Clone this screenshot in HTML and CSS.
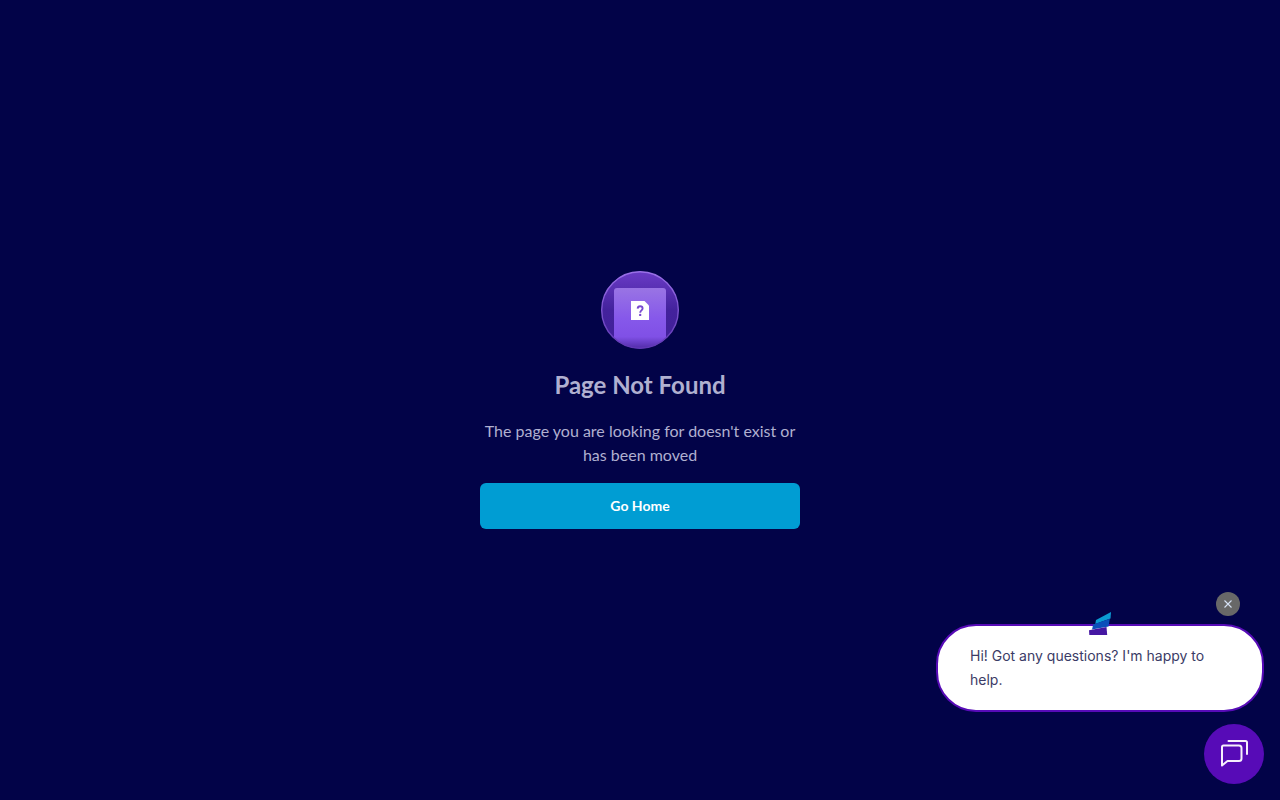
FILE: index.html
```html
<!DOCTYPE html>
<html lang="en">
<head>
<meta charset="utf-8">
<meta name="viewport" content="width=device-width, initial-scale=1">
<title>Page Not Found</title>
<link rel="stylesheet" href="styles.css">
</head>
<body>
<main class="not-found">
  <svg class="badge" viewBox="0 0 78 78" aria-hidden="true">
    <defs>
      <linearGradient id="disc" x1="0" y1="0" x2="0" y2="1">
        <stop offset="0" stop-color="#6a3bc6"/>
        <stop offset=".5" stop-color="#43229c"/>
        <stop offset="1" stop-color="#41209a"/>
      </linearGradient>
      <linearGradient id="panel" x1="0" y1="17" x2="0" y2="78" gradientUnits="userSpaceOnUse">
        <stop offset="0" stop-color="#9974e4"/>
        <stop offset=".5" stop-color="#8658ea"/>
        <stop offset=".8" stop-color="#8050e6"/>
        <stop offset="1" stop-color="#4f2aa4"/>
      </linearGradient>
      <linearGradient id="rim" x1="0" y1="0" x2="0" y2="1">
        <stop offset="0" stop-color="#9a70e8"/>
        <stop offset="1" stop-color="#6038b4"/>
      </linearGradient>
      <clipPath id="round"><circle cx="39" cy="39" r="38.5"/></clipPath>
    </defs>
    <circle cx="39" cy="39" r="38.5" fill="url(#disc)"/>
    <rect x="13" y="17" width="52" height="66" rx="3" fill="url(#panel)" clip-path="url(#round)"/>
    <circle cx="39" cy="39" r="38.3" fill="none" stroke="url(#rim)" stroke-width="1.4"/>
    <path d="M30 30H43.500L48 34.500V49H30Z" fill="#fff"/>
    <path d="M36.600 37.600C36.800 36 37.800 35.200 39.100 35.200C40.600 35.200 41.600 36.100 41.600 37.500C41.600 39.300 39.200 39.500 39.200 41.700" fill="none" stroke="#7849d0" stroke-width="1.900"/>
    <circle cx="39.200" cy="43.900" r="1.200" fill="#7849d0"/>
  </svg>
  <h1 class="title">Page Not Found</h1>
  <p class="message">The page you are looking for doesn't exist or has been moved</p>
  <button class="home" type="button">Go Home</button>
</main>

<aside class="chat" aria-label="Chat">
  <button class="dismiss" type="button" aria-label="Close message">
    <svg width="8" height="8" viewBox="0 0 8 8" aria-hidden="true"><path d="M.5 .5L7.500 7.500M7.500 .5L.5 7.500" stroke="#d5e1f5" stroke-width="1.100"/></svg>
  </button>
  <div class="bubble">
    <svg class="logo" viewBox="0 0 22 23" aria-hidden="true">
      <path d="M7 8L22 0L21.500 6.500L6.300 12Z" fill="#0b9bd3"/>
      <path d="M4.200 12.600L20.800 6.800L19.600 14.400L3 17.500Z" fill="#0b4fba"/>
      <path d="M0 18.200L17.500 15L18.200 22.900H.3Z" fill="#4517a2"/>
    </svg>
    <p class="greeting">Hi! Got any questions? I'm happy to help.</p>
  </div>
  <button class="launcher" type="button" aria-label="Open chat">
    <svg width="30" height="30" viewBox="0 0 30 30" fill="none" stroke="#f6effc" stroke-width="2" stroke-linejoin="round" stroke-linecap="round" aria-hidden="true">
      <path d="M4.500 6.500H20Q22.500 6.500 22.500 9V19.500Q22.500 22 20 22H8.500L3 26.500V8Q3 6.500 4.500 6.500Z"/>
      <path d="M9.500 2H26.500Q28 2 28 3.500V15"/>
    </svg>
  </button>
</aside>
</body>
</html>
```
FILE: styles.css
```css
* {
  box-sizing: border-box;
}

body {
  margin: 0;
  min-height: 100vh;
  display: flex;
  align-items: center;
  justify-content: center;
  background: #020348;
  font-family: Lato, "Liberation Sans", sans-serif;
}

button {
  border: 0;
  padding: 0;
  cursor: pointer;
  font-family: inherit;
}

.not-found {
  display: flex;
  flex-direction: column;
  align-items: center;
  width: 100%;
  max-width: 320px;
  text-align: center;
  color: #b0b0d0;
}

.badge {
  width: 78px;
  height: 78px;
}

.title {
  margin: 20px 0 18px;
  font-size: 24px;
  line-height: 32px;
  font-weight: 700;
}

.message {
  margin: 0 0 16px;
  font-size: 16px;
  line-height: 24px;
}

.home {
  width: 100%;
  padding: 12px 16px;
  border-radius: 6px;
  background: #009dd3;
  color: #fff;
  font-size: 14px;
  line-height: 22px;
  font-weight: 700;
}

.chat {
  position: fixed;
  right: 16px;
  bottom: 16px;
  display: flex;
  flex-direction: column;
  align-items: flex-end;
}

.dismiss {
  display: grid;
  place-items: center;
  width: 24px;
  height: 24px;
  margin: 0 24px 8px 0;
  border-radius: 50%;
  background: #686868;
}

.bubble {
  position: relative;
  width: 328px;
  max-width: calc(100vw - 32px);
  margin-bottom: 12px;
  padding: 18px 32px;
  border: 2px solid #570bb7;
  border-radius: 40px;
  background: #fff;
}

.logo {
  position: absolute;
  top: -14px;
  left: 50%;
  width: 22px;
  transform: translateX(-50%);
}

.greeting {
  margin: 0;
  color: #3b3b66;
  font-family: Inter, "Liberation Sans", sans-serif;
  font-size: 14px;
  line-height: 24px;
}

.launcher {
  display: grid;
  place-items: center;
  width: 60px;
  height: 60px;
  border-radius: 50%;
  background: #570bb7;
}
```
